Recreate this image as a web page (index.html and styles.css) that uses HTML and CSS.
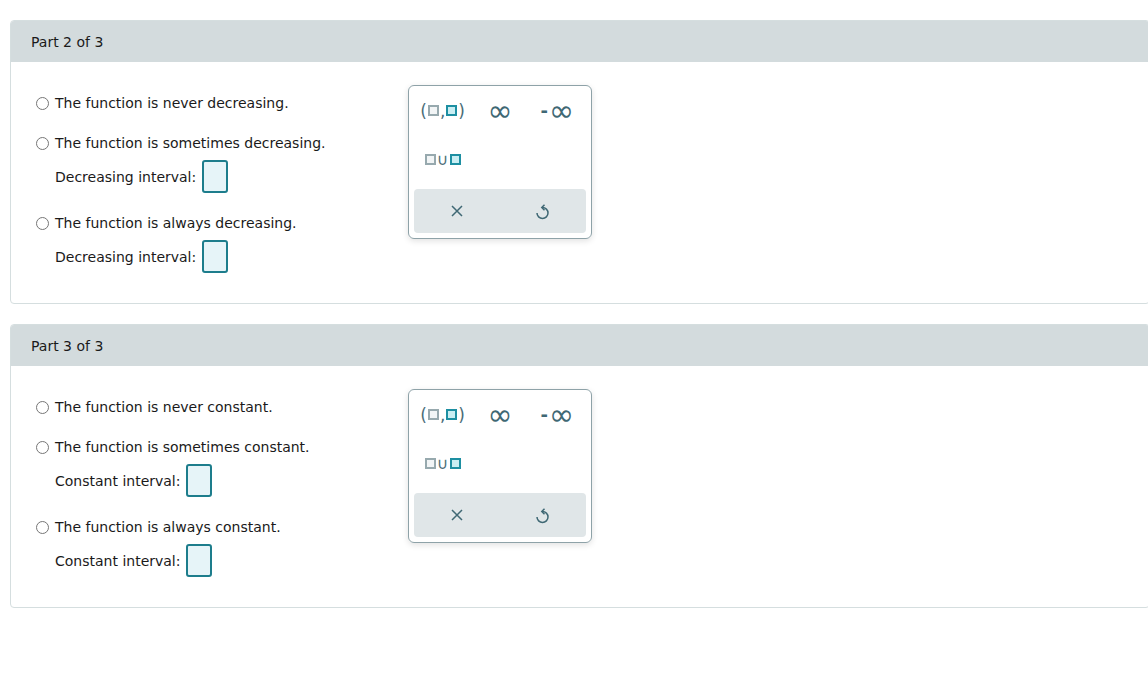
FILE: index.html
```html
<!DOCTYPE html>
<html lang="en">
<head>
    <meta charset="UTF-8">
    <title>Intervals</title>
    <link rel="stylesheet" href="styles.css">
</head>
<body>

<div class="part">
    <div class="part-header">Part 2 of 3</div>
    <div class="part-body">
        <div class="options">
            <label class="option"><input type="radio" name="p2"> The function is never decreasing.</label>
            <label class="option"><input type="radio" name="p2"> The function is sometimes decreasing.</label>
            <div class="interval">Decreasing interval: <span class="answer-box"></span></div>
            <label class="option"><input type="radio" name="p2"> The function is always decreasing.</label>
            <div class="interval">Decreasing interval: <span class="answer-box"></span></div>
        </div>
        <div class="palette">
            <div class="palette-grid">
                <button class="key">(<span class="sq"></span>,<span class="sq sq-on"></span>)</button>
                <button class="key inf">∞</button>
                <button class="key inf"><span class="minus">-</span>∞</button>
                <button class="key union"><span class="sq"></span>∪<span class="sq sq-on"></span></button>
            </div>
            <div class="palette-actions">
                <button class="action">
                    <svg width="14" height="14" viewBox="0 0 14 14"><path d="M2 2 L12 12 M12 2 L2 12" stroke="#3f6874" stroke-width="1.5" fill="none"/></svg>
                </button>
                <button class="action">
                    <svg width="14" height="18" viewBox="0 0 14 18"><path d="M6.5 5.5 A5.5 5.5 0 1 1 1 11" stroke="#3f6874" stroke-width="1.5" fill="none"/><path d="M8.5 2.8 L5.8 5.5 L8.5 8.2" stroke="#3f6874" stroke-width="1.5" fill="none"/></svg>
                </button>
            </div>
        </div>
    </div>
</div>

<div class="part">
    <div class="part-header">Part 3 of 3</div>
    <div class="part-body">
        <div class="options">
            <label class="option"><input type="radio" name="p3"> The function is never constant.</label>
            <label class="option"><input type="radio" name="p3"> The function is sometimes constant.</label>
            <div class="interval">Constant interval: <span class="answer-box"></span></div>
            <label class="option"><input type="radio" name="p3"> The function is always constant.</label>
            <div class="interval">Constant interval: <span class="answer-box"></span></div>
        </div>
        <div class="palette">
            <div class="palette-grid">
                <button class="key">(<span class="sq"></span>,<span class="sq sq-on"></span>)</button>
                <button class="key inf">∞</button>
                <button class="key inf"><span class="minus">-</span>∞</button>
                <button class="key union"><span class="sq"></span>∪<span class="sq sq-on"></span></button>
            </div>
            <div class="palette-actions">
                <button class="action">
                    <svg width="14" height="14" viewBox="0 0 14 14"><path d="M2 2 L12 12 M12 2 L2 12" stroke="#3f6874" stroke-width="1.5" fill="none"/></svg>
                </button>
                <button class="action">
                    <svg width="14" height="18" viewBox="0 0 14 18"><path d="M6.5 5.5 A5.5 5.5 0 1 1 1 11" stroke="#3f6874" stroke-width="1.5" fill="none"/><path d="M8.5 2.8 L5.8 5.5 L8.5 8.2" stroke="#3f6874" stroke-width="1.5" fill="none"/></svg>
                </button>
            </div>
        </div>
    </div>
</div>

</body>
</html>
```

FILE: styles.css
```css
body {
    font-family: "DejaVu Sans", Verdana, sans-serif;
    font-size: 14px;
    color: #1a1a1a;
    margin: 0;
    padding: 20px 0 0 10px;
    overflow: hidden;
}

.part {
    width: 1138px;
    border: 1px solid #d5dedf;
    border-radius: 4px;
    margin-bottom: 20px;
    background-color: #fff;
}

.part-header {
    background-color: #d3dbdd;
    height: 41px;
    line-height: 43px;
    padding-left: 20px;
    border-radius: 3px 3px 0 0;
}

.part-body {
    display: flex;
    align-items: flex-start;
    padding: 23px 0 30px 25px;
}

.options {
    width: 372px;
    padding-top: 8px;
}

.option {
    display: flex;
    align-items: center;
    height: 20px;
    margin-bottom: 20px;
}

.option input {
    appearance: none;
    width: 13px;
    height: 13px;
    border: 1px solid #767676;
    border-radius: 50%;
    margin: 0 6px 0 0;
    background: #fff;
}

.interval {
    display: flex;
    align-items: center;
    gap: 6px;
    height: 33px;
    margin: -14px 0 20px 19px;
    padding-top: 1px;
}

.interval:last-child {
    margin-bottom: 0;
}

.answer-box {
    display: inline-block;
    width: 22px;
    height: 29px;
    background-color: #e6f4f8;
    border: 2px solid #1d7d8c;
    border-radius: 3px;
}

.palette {
    width: 172px;
    padding: 0 5px 5px;
    border: 1px solid #8ea2a8;
    border-radius: 6px;
    box-shadow: 0 2px 6px rgba(0, 0, 0, 0.12);
}

.palette-grid {
    display: grid;
    grid-template-columns: repeat(3, 1fr);
    grid-auto-rows: 49px;
    margin-bottom: 5px;
}

button {
    background: none;
    border: none;
    padding: 0;
    cursor: pointer;
    font-family: "DejaVu Sans", Verdana, sans-serif;
}

.key {
    display: flex;
    align-items: center;
    justify-content: center;
    color: #4a6d78;
    font-size: 17px;
}

.key.inf {
    font-size: 30px;
    line-height: 1;
    color: #3f6874;
    padding-top: 1px;
}

.minus {
    font-size: 18px;
    font-weight: bold;
    margin-right: 1px;
}

.sq {
    display: inline-block;
    width: 7px;
    height: 7px;
    border: 2px solid #97a9ae;
    background-color: #f2f5f6;
    margin: 0 1px;
}

.sq-on {
    border-color: #1d8fa2;
    background-color: #c9eef3;
}

.union {
    font-size: 16px;
}

.palette-actions {
    display: flex;
    height: 44px;
    background-color: #e0e6e8;
    border-radius: 4px;
}

.action {
    flex: 1;
    display: flex;
    align-items: center;
    justify-content: center;
}
```
